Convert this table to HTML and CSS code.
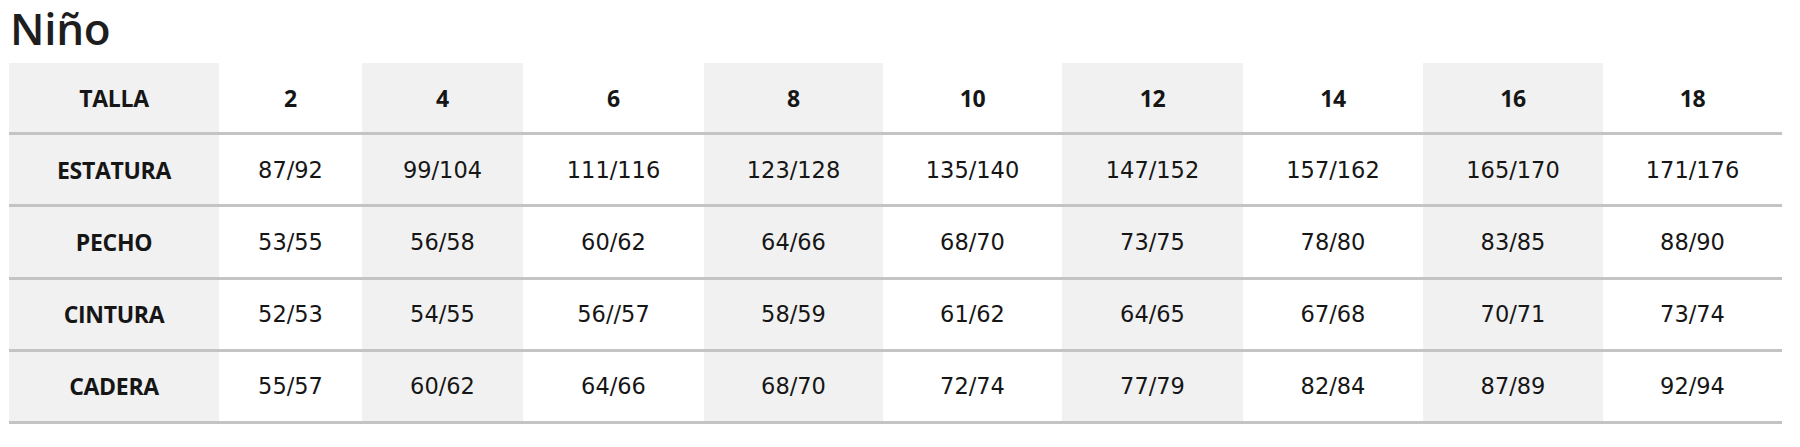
FILE: index.html
```html
<!DOCTYPE html>
<html lang="es">
<head>
<meta charset="utf-8">
<title>Niño</title>
<link rel="stylesheet" href="styles.css">
</head>
<body>
<div class="page">
  <h1 class="title">Niño</h1>
  <table class="sizes">
    <colgroup>
      <col class="c-label shade">
      <col class="c-2">
      <col class="c-4 shade">
      <col class="c-6">
      <col class="c-8 shade">
      <col class="c-10">
      <col class="c-12 shade">
      <col class="c-14">
      <col class="c-16 shade">
      <col class="c-18">
    </colgroup>
    <thead>
      <tr>
        <th>TALLA</th><th>2</th><th>4</th><th>6</th><th>8</th><th>10</th><th>12</th><th>14</th><th>16</th><th>18</th>
      </tr>
    </thead>
    <tbody>
      <tr>
        <th>ESTATURA</th><td>87/92</td><td>99/104</td><td>111/116</td><td>123/128</td><td>135/140</td><td>147/152</td><td>157/162</td><td>165/170</td><td>171/176</td>
      </tr>
      <tr>
        <th>PECHO</th><td>53/55</td><td>56/58</td><td>60/62</td><td>64/66</td><td>68/70</td><td>73/75</td><td>78/80</td><td>83/85</td><td>88/90</td>
      </tr>
      <tr>
        <th>CINTURA</th><td>52/53</td><td>54/55</td><td>56//57</td><td>58/59</td><td>61/62</td><td>64/65</td><td>67/68</td><td>70/71</td><td>73/74</td>
      </tr>
      <tr>
        <th>CADERA</th><td>55/57</td><td>60/62</td><td>64/66</td><td>68/70</td><td>72/74</td><td>77/79</td><td>82/84</td><td>87/89</td><td>92/94</td>
      </tr>
    </tbody>
  </table>
</div>
</body>
</html>
```
FILE: styles.css
```css
html, body {
  margin: 0;
  padding: 0;
  background: #ffffff;
}

.page {
  padding: 0 9px;
  color: #1f1f1f;
}

.title {
  font-family: "Open Sans", "Noto Sans", sans-serif;
  font-weight: 600;
  font-size: 44px;
  line-height: 50px;
  margin: 0 0 10px 0;
  padding: 3px 0 0 1px;
  color: #1e1e1e;
  letter-spacing: -0.3px;
}

.sizes {
  width: 1773px;
  border-collapse: collapse;
  table-layout: fixed;
}

.c-label { width: 210px; }
.c-2 { width: 143px; }
.c-4 { width: 161px; }
.c-6 { width: 181px; }
.c-8 { width: 179px; }
.c-10 { width: 179px; }
.c-12 { width: 181px; }
.c-14 { width: 180px; }
.c-16 { width: 180px; }
.c-18 { width: 179px; }

.shade { background: #f1f1f1; }

.sizes th,
.sizes td {
  padding: 0;
  text-align: center;
  vertical-align: middle;
  border-bottom: 3px solid #c4c4c4;
  color: #161616;
}

.sizes thead th {
  height: 69px;
}

.sizes tbody th,
.sizes tbody td {
  height: 69.25px;
}

.sizes th {
  font-family: "Open Sans", "Noto Sans", sans-serif;
  font-weight: 700;
  font-size: 23px;
  letter-spacing: -0.3px;
}

.sizes td {
  font-family: "DejaVu Sans", sans-serif;
  font-weight: 400;
  font-size: 22.5px;
}
```
